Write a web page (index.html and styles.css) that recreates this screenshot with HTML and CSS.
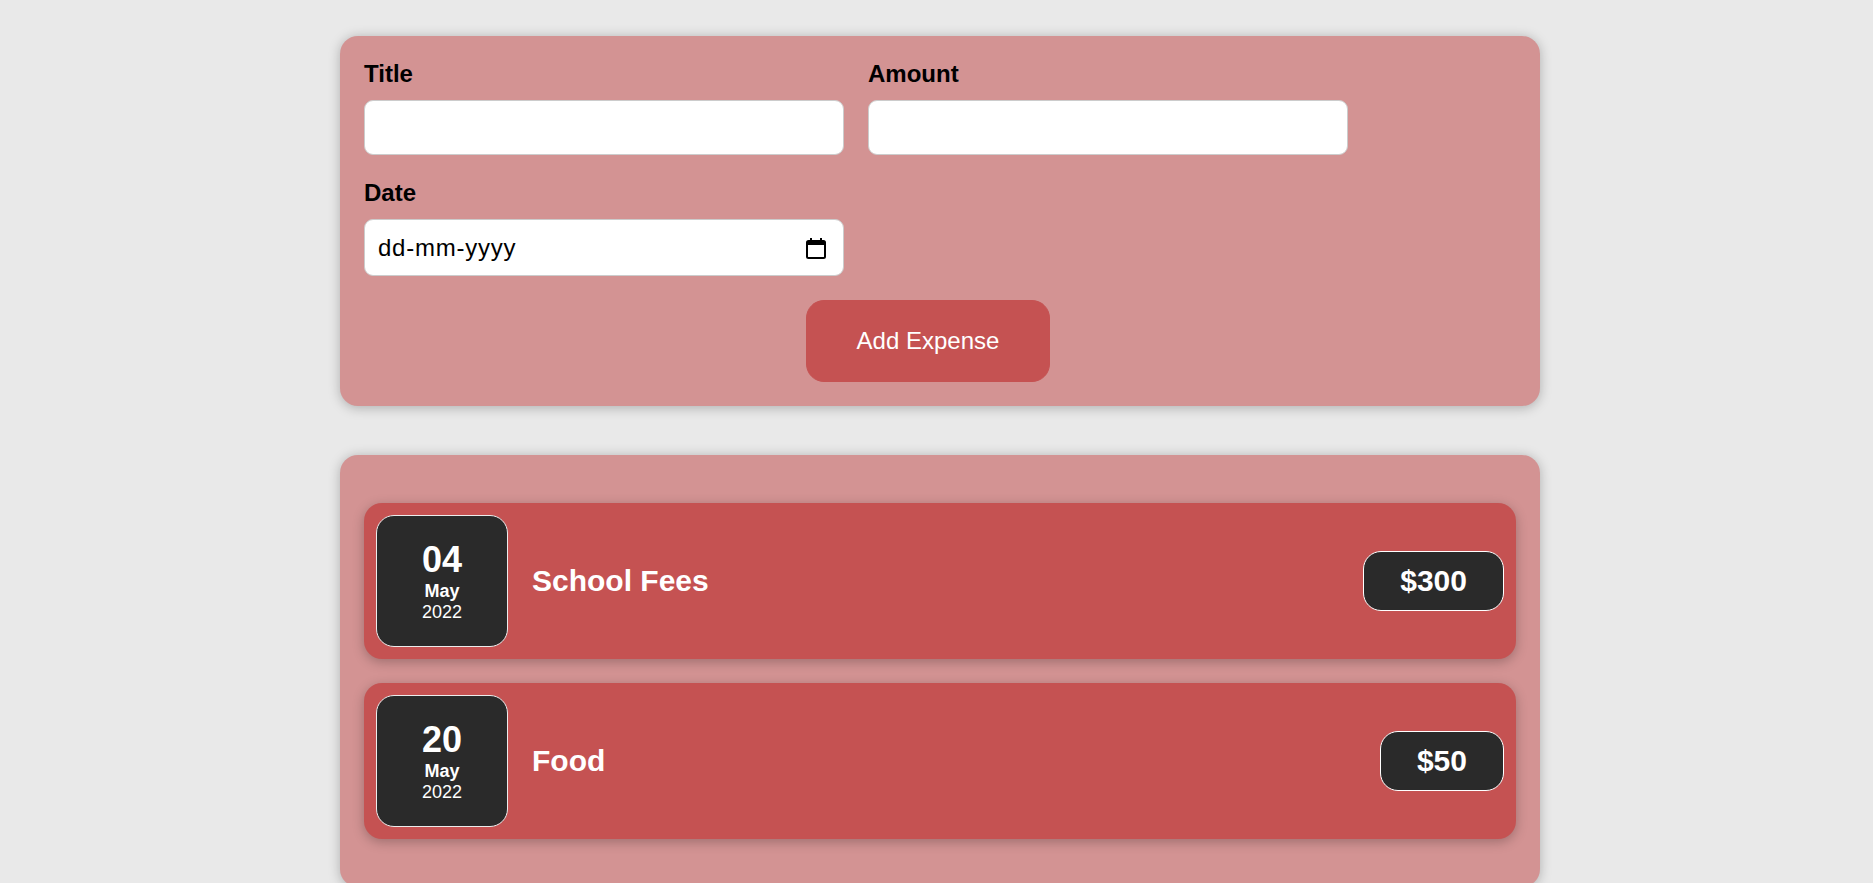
FILE: index.html
```html
<!DOCTYPE html>
<html lang="en">
<head>
<meta charset="utf-8">
<title>Expenses</title>
<link rel="stylesheet" href="styles.css">
</head>
<body>
<div class="new-expense">
  <form class="expense-form">
    <div class="controls">
      <div class="control">
        <label>Title</label>
        <input type="text" class="field">
      </div>
      <div class="control">
        <label>Amount</label>
        <input type="text" class="field">
      </div>
      <div class="control">
        <label>Date</label>
        <div class="field date-field">
          <span class="date-text">dd-mm-yyyy</span>
          <svg class="cal-icon" width="20" height="22" viewBox="0 0 20 22">
            <rect x="1" y="4" width="18" height="17" rx="1.5" fill="none" stroke="#000" stroke-width="2"/>
            <rect x="1" y="4" width="18" height="4" fill="#000"/>
            <rect x="4" y="1" width="2" height="4" fill="#000"/>
            <rect x="14" y="1" width="2" height="4" fill="#000"/>
          </svg>
        </div>
      </div>
    </div>
    <div class="actions">
      <button type="button" class="add-btn">Add Expense</button>
    </div>
  </form>
</div>

<div class="expenses">
  <ul class="expense-list">
    <li class="expense-item">
      <div class="expense-date">
        <div class="day">04</div>
        <div class="month">May</div>
        <div class="year">2022</div>
      </div>
      <div class="description">
        <h2>School Fees</h2>
        <div class="price">$300</div>
      </div>
    </li>
    <li class="expense-item">
      <div class="expense-date">
        <div class="day">20</div>
        <div class="month">May</div>
        <div class="year">2022</div>
      </div>
      <div class="description">
        <h2>Food</h2>
        <div class="price">$50</div>
      </div>
    </li>
  </ul>
</div>
</body>
</html>
```
FILE: styles.css
```css
* {
  box-sizing: border-box;
}

html {
  font-family: "Liberation Sans", Arial, sans-serif;
  font-size: 24px;
}

body {
  margin: 0;
  padding-left: 7px;
  background-color: #e9e9e9;
}

.new-expense {
  background-color: #d39393;
  padding: 24px;
  margin: 36px auto 49px;
  width: 1200px;
  border-radius: 18px;
  text-align: center;
  box-shadow: 0 1.5px 12px rgba(0, 0, 0, 0.25);
}

.controls {
  display: flex;
  flex-wrap: wrap;
  gap: 24px;
  margin-bottom: 24px;
  text-align: left;
}

.control label {
  display: block;
  font-weight: bold;
  margin-bottom: 12px;
  line-height: 28px;
  color: #000;
}

.field {
  font: inherit;
  width: 480px;
  height: 55px;
  padding: 12px;
  border-radius: 9px;
  border: 1px solid #ccc;
  background: #fff;
  outline: none;
}

.date-field {
  height: 57px;
  display: flex;
  align-items: center;
  justify-content: space-between;
  padding: 0 17px 0 13px;
  color: #000;
}

.date-text {
  letter-spacing: 0.75px;
}

.cal-icon {
  display: block;
}

.actions {
  text-align: center;
}

.add-btn {
  font: inherit;
  line-height: 28px;
  cursor: pointer;
  padding: 26px 50px;
  border: 1px solid #c55252;
  background-color: #c55252;
  color: #fff;
  border-radius: 18px;
  margin-right: 24px;
}

.expenses {
  background-color: #d39393;
  padding: 24px;
  margin: 0 auto;
  width: 1200px;
  border-radius: 18px;
  box-shadow: 0 1.5px 12px rgba(0, 0, 0, 0.25);
}

.expense-list {
  list-style: none;
  margin: 0;
  padding: 0;
}

.expense-item {
  display: flex;
  align-items: center;
  padding: 12px;
  margin: 24px 0;
  border-radius: 18px;
  background-color: #c55252;
  box-shadow: 0 3px 12px rgba(0, 0, 0, 0.25);
}

.expense-date {
  display: flex;
  flex-direction: column;
  align-items: center;
  justify-content: center;
  width: 132px;
  height: 132px;
  border: 1px solid #ececec;
  background-color: #2a2a2a;
  color: #fff;
  border-radius: 18px;
  flex-shrink: 0;
}

.day {
  font-size: 36px;
  font-weight: bold;
}

.month {
  font-size: 18px;
  font-weight: bold;
}

.year {
  font-size: 18px;
}

.description {
  display: flex;
  flex: 1;
  align-items: center;
  gap: 24px;
}

.description h2 {
  flex: 1;
  margin: 0 24px;
  font-size: 30px;
  color: #fff;
}

.price {
  font-size: 30px;
  font-weight: bold;
  color: #fff;
  background-color: #2a2a2a;
  border: 1px solid #fff;
  padding: 12px 36px;
  border-radius: 18px;
}
```
